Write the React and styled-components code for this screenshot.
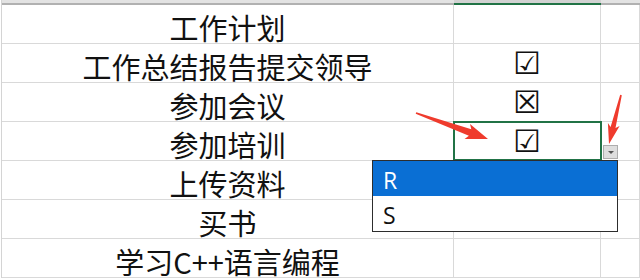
import React from 'react';
import styled, { createGlobalStyle } from 'styled-components';

const GlobalStyle = createGlobalStyle`
  html, body {
    margin: 0;
    padding: 0;
    background: #fff;
  }
  body {
    width: 640px;
    height: 280px;
    overflow: hidden;
  }
`;

const Page = styled.div`
  position: relative;
  width: 640px;
  height: 280px;
  overflow: hidden;
  background: #fff;
`;

const Sheet = styled.div`
  display: grid;
  grid-template-columns: 452px 147px 1fr;
  margin-left: 1px;
  border-left: 1px solid #d4d4d4;
`;

const HeaderCell = styled.div`
  box-sizing: border-box;
  height: 5px;
  background: ${(p) => (p.$active ? '#d2d2d2' : '#e3e3e3')};
  border-bottom: 2px solid ${(p) => (p.$active ? '#217346' : '#b1b1b1')};
`;

const Cell = styled.div`
  position: relative;
  box-sizing: border-box;
  height: 39px;
  border-right: 1px solid #d9d9d9;
  border-bottom: 1px solid #d9d9d9;
  display: flex;
  align-items: center;
  justify-content: center;
  color: #111;

  ${(p) =>
    p.$selected &&
    `
    &::after {
      content: '';
      position: absolute;
      top: -1px;
      left: -1px;
      right: -2px;
      bottom: -1px;
      border: 2px solid #217346;
      pointer-events: none;
    }
  `}
`;

const TaskCell = styled(Cell)`
  padding-top: 6px;
  font-family: "Noto Sans CJK SC", "Noto Sans", sans-serif;
  font-size: 29px;
  line-height: 1;
  white-space: nowrap;
`;

const MarkCell = styled(Cell)`
  padding-top: 1px;
  font-family: "DejaVu Sans", sans-serif;
  font-size: 31px;
  font-weight: ${(p) => (p.$bold ? 700 : 400)};
  line-height: 1;
`;

const DropButton = styled.div`
  position: absolute;
  left: 149px;
  top: 23px;
  box-sizing: border-box;
  width: 15px;
  height: 14px;
  background: #dedede;
  border: 1px solid #adadad;
  display: flex;
  align-items: center;
  justify-content: center;
  z-index: 2;

  &::before {
    content: '';
    width: 0;
    height: 0;
    border-left: 3px solid transparent;
    border-right: 3px solid transparent;
    border-top: 3px solid #555;
  }
`;

const DropList = styled.ul`
  position: absolute;
  left: -82px;
  top: 38px;
  box-sizing: border-box;
  width: 246px;
  margin: 0;
  padding: 0;
  list-style: none;
  background: #fff;
  border: 1px solid #2d2d2d;
  z-index: 3;
`;

const DropItem = styled.li`
  box-sizing: border-box;
  height: 35px;
  padding: 3px 0 0 10px;
  display: flex;
  align-items: center;
  font-family: "Open Sans", "Noto Sans", sans-serif;
  font-size: 23px;
  font-weight: 400;
  line-height: 1;
  background: ${(p) => (p.$active ? '#0a6fd4' : '#fff')};
  color: ${(p) => (p.$active ? '#fff' : '#111')};
`;

const Overlay = styled.svg`
  position: absolute;
  left: 0;
  top: 0;
  pointer-events: none;
  z-index: 5;
`;

const tasks = [
  { name: '工作计划', mark: '' },
  { name: '工作总结报告提交领导', mark: '☑' },
  { name: '参加会议', mark: '☒' },
  { name: '参加培训', mark: '☑', selected: true },
  { name: '上传资料', mark: '' },
  { name: '买书', mark: '' },
  { name: '学习C++语言编程', mark: '' },
];

function arrowPoints(tail, tip, hl, hw, sw) {
  const dx = tip[0] - tail[0];
  const dy = tip[1] - tail[1];
  const len = Math.hypot(dx, dy);
  const ux = dx / len;
  const uy = dy / len;
  const nx = -uy;
  const ny = ux;
  const bx = tip[0] - ux * hl;
  const by = tip[1] - uy * hl;
  const pts = [
    [tail[0] + nx * 0.8, tail[1] + ny * 0.8],
    [bx + ux * 3 + nx * sw, by + uy * 3 + ny * sw],
    [bx + nx * hw, by + ny * hw],
    tip,
    [bx - nx * hw, by - ny * hw],
    [bx + ux * 3 - nx * sw, by + uy * 3 - ny * sw],
    [tail[0] - nx * 0.8, tail[1] - ny * 0.8],
  ];
  return pts.map((p) => p.map((v) => v.toFixed(1)).join(',')).join(' ');
}

export default function App() {
  return (
    <Page>
      <GlobalStyle />
      <Sheet>
        <HeaderCell />
        <HeaderCell $active />
        <HeaderCell />
        {tasks.map((t) => (
          <React.Fragment key={t.name}>
            <TaskCell>{t.name}</TaskCell>
            <MarkCell $selected={t.selected} $bold={t.mark === '☑'}>
              {t.mark}
              {t.selected && (
                <>
                  <DropButton />
                  <DropList>
                    <DropItem $active>R</DropItem>
                    <DropItem>S</DropItem>
                  </DropList>
                </>
              )}
            </MarkCell>
            <Cell />
          </React.Fragment>
        ))}
      </Sheet>
      <Overlay width="640" height="280" viewBox="0 0 640 280">
        <polygon points={arrowPoints([416, 113], [488, 139], 22, 8, 3.5)} fill="#ef3b2d" />
        <polygon points={arrowPoints([621, 95], [609, 144], 20, 6, 2.5)} fill="#ef3b2d" />
      </Overlay>
    </Page>
  );
}
